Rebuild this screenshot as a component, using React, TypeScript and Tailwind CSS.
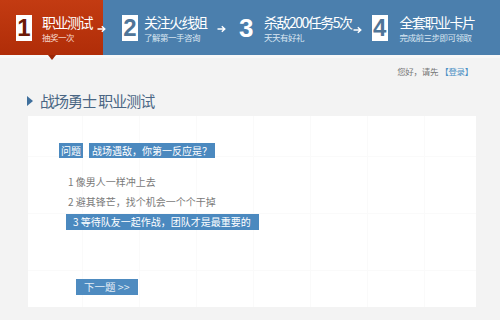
import React from "react";

const Arrow = () => (
  <svg width="9" height="8" viewBox="0 0 9 8" className="shrink-0">
    <path d="M0.5 4H7.5M4.8 1.2L7.8 4L4.8 6.8" stroke="#ffffff" strokeWidth="1.4" fill="none" />
  </svg>
);

const NumBox = ({ n, color }: { n: string; color: string }) => (
  <div className="w-[16px] h-[26px] bg-white flex items-center justify-center shrink-0">
    <span className="font-['Liberation_Sans',sans-serif] font-bold text-[24px] leading-[24px]" style={{ color }}>
      {n}
    </span>
  </div>
);

const StepText = ({ title, sub, subColor }: { title: string; sub: string; subColor: string }) => (
  <div className="flex flex-col shrink-0">
    <span className="text-white text-[14px] leading-[16px] tracking-[-1.5px] whitespace-nowrap">{title}</span>
    <span className="text-[8.5px] leading-[10px] mt-[2px] tracking-[-0.5px] whitespace-nowrap" style={{ color: subColor }}>
      {sub}
    </span>
  </div>
);

export default function App() {
  return (
    <div className="w-[500px] h-[320px] overflow-hidden bg-[#f3f3f3] font-['Noto_Sans_CJK_SC','Noto_Sans',sans-serif]">
      {/* header */}
      <div className="flex h-[55px] bg-[#4b7fad]">
        <div className="relative w-[103px] h-full shrink-0 bg-[linear-gradient(to_bottom,#c33b12,#b02d08)] flex items-center pl-[16px]">
          <NumBox n="1" color="#6e1a06" />
          <div className="ml-[10px] w-[46px]">
            <StepText title="职业测试" sub="抽奖一次" subColor="#f6d8cc" />
          </div>
          <div className="ml-[9px] mt-[2px]">
            <Arrow />
          </div>
          <div className="absolute left-[48px] top-[55px] w-0 h-0 border-l-[4px] border-r-[4px] border-t-[5px] border-l-transparent border-r-transparent border-t-[#9c2606]" />
        </div>
        <div className="flex items-center h-full">
          <div className="ml-[19px]">
            <NumBox n="2" color="#4f7598" />
          </div>
          <div className="ml-[6px] w-[68px]">
            <StepText title="关注火线姐" sub="了解第一手咨询" subColor="#dbe7f2" />
          </div>
          <div className="ml-[5px] mt-[2px]">
            <Arrow />
          </div>
          <span className="ml-[13px] w-[18px] text-white font-['Liberation_Sans',sans-serif] font-bold text-[26px] leading-[28px]">
            3
          </span>
          <div className="ml-[7px]">
            <StepText title="杀敌200任务5次" sub="天天有好礼" subColor="#dbe7f2" />
          </div>
          <div className="ml-[1px] mt-[4px]">
            <Arrow />
          </div>
          <div className="ml-[10px]">
            <NumBox n="4" color="#4f7598" />
          </div>
          <div className="ml-[12px]">
            <StepText title="全套职业卡片" sub="完成前三步即可领取" subColor="#dbe7f2" />
          </div>
        </div>
      </div>
      <div className="h-[3px] bg-[#f8f8f8]" />

      {/* greeting */}
      <div className="flex justify-end pr-[27px] mt-[7px] h-[12px] items-center text-[8.5px] leading-[12px] tracking-[-0.3px]">
        <span className="text-[#777777]">您好，请先</span>
        <span className="text-[#4a8fc4] ml-[2px]">【登录】</span>
      </div>

      {/* heading */}
      <div className="flex items-center pl-[27px] mt-[14px] h-[20px]">
        <div className="w-0 h-0 border-t-[5px] border-b-[5px] border-l-[6px] border-t-transparent border-b-transparent border-l-[#3f6f9c]" />
        <span className="ml-[7px] text-[15px] leading-[20px] tracking-[-1px] text-[#4a6684]">战场勇士 职业测试</span>
      </div>

      {/* card */}
      <div className="ml-[28px] mt-[5px] w-[448px] h-[191px] bg-white bg-[linear-gradient(to_right,#fafafa_1px,transparent_1px),linear-gradient(to_bottom,#fafafa_1px,transparent_1px)] bg-[size:57px_57px] bg-[position:54px_40px] pt-[27px] pl-[31px]">
        <div className="flex items-center h-[15px]">
          <span className="h-[15px] px-[2px] bg-[#4b89bf] text-white text-[10px] leading-[15px]">问题</span>
          <span className="ml-[6px] h-[15px] px-[3px] bg-[#4b89bf] text-white text-[10px] leading-[15px]">
            战场遇敌，你第一反应是？
          </span>
        </div>
        <div className="ml-[9px] mt-[16px] flex flex-col gap-[4px] text-[10px] leading-[16px]">
          <span className="h-[16px] text-[#7a7a7a]">1 像男人一样冲上去</span>
          <span className="h-[16px] text-[#7a7a7a]">2 避其锋芒，找个机会一个个干掉</span>
          <span className="h-[16px] -ml-[2px] self-start pl-[7px] pr-[8px] bg-[#4b89bf] text-white">
            3 等待队友一起作战，团队才是最重要的
          </span>
        </div>
        <div className="ml-[17px] mt-[42px]">
          <span className="inline-block h-[16px] w-[62px] pl-[8px] bg-[#4e8bc0] text-[#e3edf6] text-[10.5px] leading-[16px]">
            下一题 &gt;&gt;
          </span>
        </div>
      </div>
    </div>
  );
}
